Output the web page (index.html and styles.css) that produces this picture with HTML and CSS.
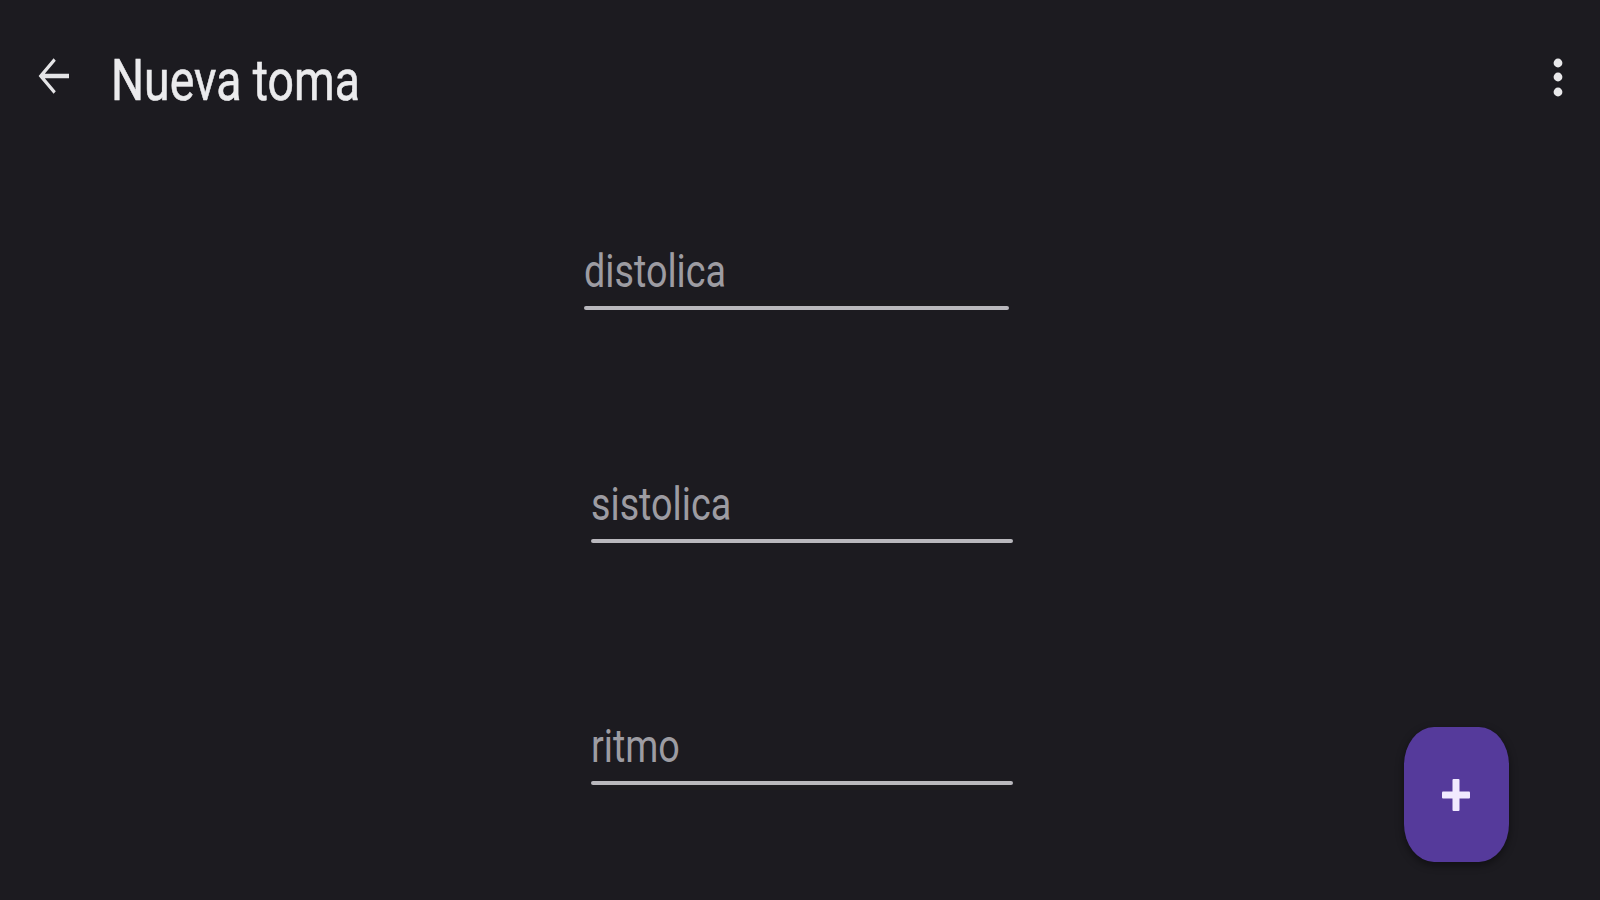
FILE: index.html
```html
<!DOCTYPE html>
<html lang="es">
<head>
<meta charset="utf-8">
<title>Nueva toma</title>
<link rel="stylesheet" href="styles.css">
</head>
<body>
<div class="screen">
  <header class="topbar">
    <svg class="back" width="32" height="38" viewBox="4 4 16 16" preserveAspectRatio="none" aria-hidden="true">
      <path d="M20 11.1H7.9l5.5-5.5L12.3 4.5 4.8 12l7.5 7.5 1.1-1.1-5.5-5.5H20z" fill="#e4e4e6"/>
    </svg>
    <h1 class="title"><span class="squeeze-title">Nueva toma</span></h1>
    <svg class="more" width="10" height="40" viewBox="0 0 10 40" aria-hidden="true">
      <circle cx="5" cy="6" r="4.4" fill="#e8e8ea"/>
      <circle cx="5" cy="20" r="4.4" fill="#e8e8ea"/>
      <circle cx="5" cy="35" r="4.4" fill="#e8e8ea"/>
    </svg>
  </header>
  <main class="form">
    <div class="field field-1">
      <div class="label"><span class="squeeze">distolica</span></div>
      <div class="line"></div>
    </div>
    <div class="field field-2">
      <div class="label"><span class="squeeze">sistolica</span></div>
      <div class="line"></div>
    </div>
    <div class="field field-3">
      <div class="label"><span class="squeeze">ritmo</span></div>
      <div class="line"></div>
    </div>
  </main>
  <button class="fab" type="button" aria-label="Agregar">
    <svg width="28" height="32" viewBox="0 0 28 32" aria-hidden="true">
      <rect x="10.5" y="0" width="7" height="32" rx="1" fill="#f1eaff"/>
      <rect x="0" y="12.5" width="28" height="7" rx="1" fill="#f1eaff"/>
    </svg>
  </button>
</div>
</body>
</html>
```
FILE: styles.css
```css
html, body {
  margin: 0;
  padding: 0;
  background: #1c1b20;
}
.screen {
  position: relative;
  width: 1600px;
  height: 900px;
  overflow: hidden;
  background: #1c1b20;
  font-family: Roboto, "Liberation Sans", sans-serif;
}
.topbar {
  display: flex;
  align-items: flex-start;
  padding: 0 37px;
  height: 110px;
}
.back {
  flex: none;
  display: block;
  margin-top: 57px;
}
.title {
  margin: 54px 0 0 42px;
  font-size: 58px;
  line-height: 52px;
  font-weight: 400;
  color: #ebebed;
  white-space: nowrap;
  -webkit-text-stroke: 0.6px #ebebed;
}
.squeeze-title {
  display: inline-block;
  transform: scaleX(0.8);
  transform-origin: left center;
}
.more {
  margin-left: auto;
  margin-top: 57px;
  flex: none;
  display: block;
}
.form {
  display: flex;
  flex-direction: column;
  padding-left: 584px;
}
.field {
  display: flex;
  flex-direction: column;
}
.field-1 {
  margin-top: 138px;
  width: 425px;
}
.field-2 {
  margin-top: 171px;
  margin-left: 7px;
  width: 422px;
}
.field-3 {
  margin-top: 180px;
  margin-left: 7px;
  width: 422px;
}
.label {
  font-size: 46px;
  line-height: 46px;
  color: #9d9ca2;
  white-space: nowrap;
}
.squeeze {
  display: inline-block;
  transform: scaleX(0.82);
  transform-origin: left center;
}
.line {
  margin-top: 12px;
  height: 4px;
  border-radius: 2px;
  background: #b9b8bd;
}
.fab {
  position: absolute;
  right: 91px;
  bottom: 38px;
  width: 105px;
  height: 135px;
  border: none;
  padding: 0;
  border-radius: 30px / 38px;
  background: #553a9b;
  box-shadow: 0 3px 8px rgba(0, 0, 0, 0.45);
  display: flex;
  align-items: center;
  justify-content: center;
}
.fab svg {
  display: block;
  margin-left: -2px;
}
```
